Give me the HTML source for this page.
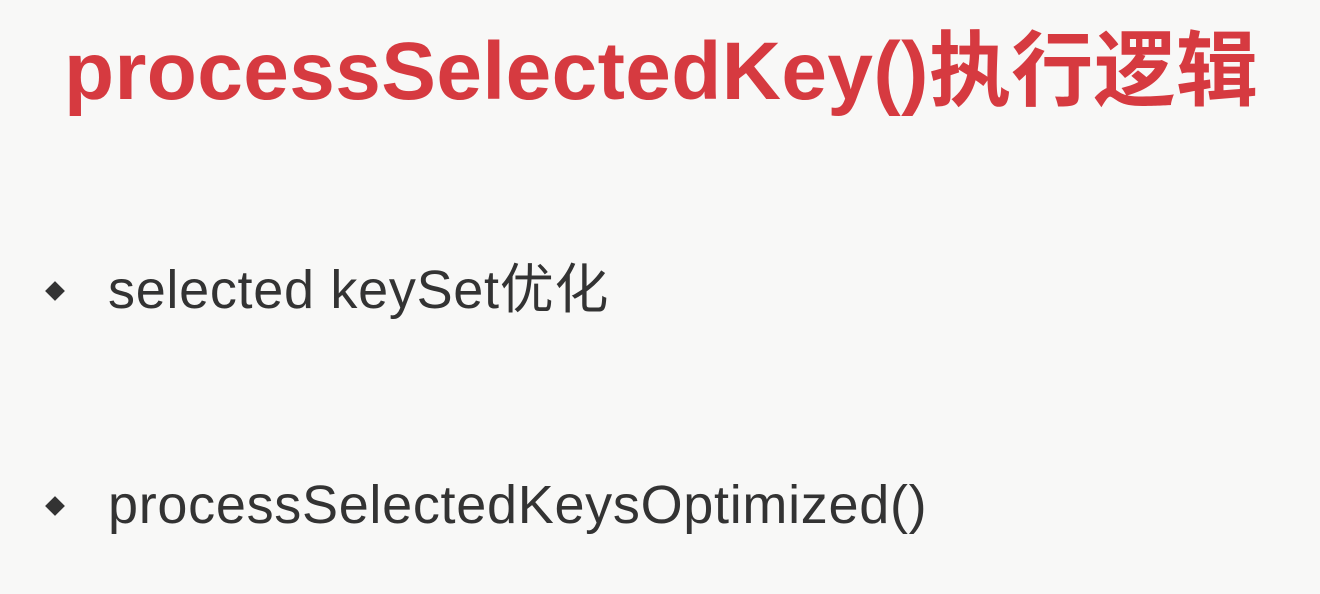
<!DOCTYPE html>
<html><head><meta charset="utf-8"><style>
html,body{margin:0;padding:0;}
body{width:1320px;height:594px;background:#f8f8f7;position:relative;overflow:hidden;font-family:"Liberation Sans","Noto Sans CJK SC",sans-serif;}
.t{position:absolute;left:64px;top:22px;font-size:82px;font-weight:bold;color:#d63a40;white-space:nowrap;line-height:100px;letter-spacing:0.4px;}
.b{position:absolute;left:108px;font-size:54px;color:#333;white-space:nowrap;line-height:60px;letter-spacing:0.7px;}
.d{position:absolute;width:14px;height:14px;background:#333;transform:rotate(45deg);left:48px;}
</style></head><body>
<div class="t">processSelectedKey()执行逻辑</div>
<div class="d" style="top:284px"></div>
<div class="b" style="top:260px">selected keySet优化</div>
<div class="d" style="top:499px"></div>
<div class="b" style="top:475px">processSelectedKeysOptimized()</div>
</body></html>
